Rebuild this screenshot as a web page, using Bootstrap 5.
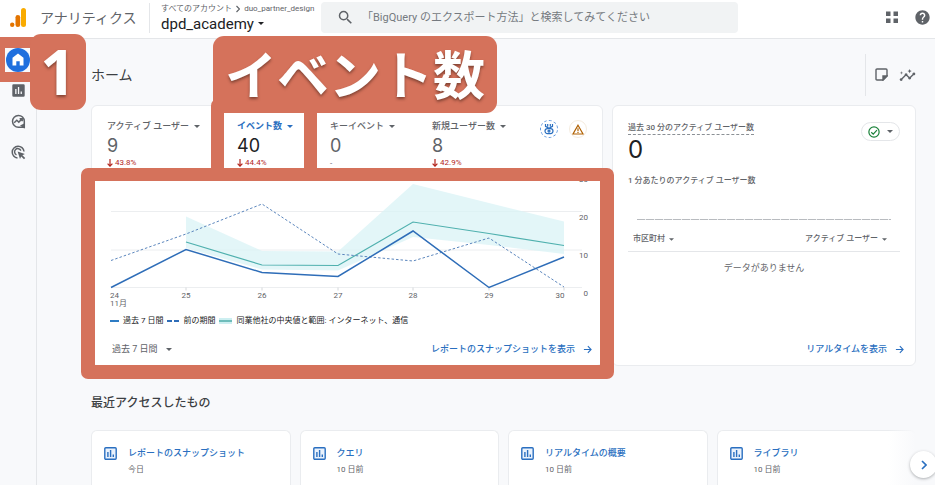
<!DOCTYPE html>
<html lang="ja">
<head>
<meta charset="utf-8">
<meta name="viewport" content="width=device-width, initial-scale=1">
<title>アナリティクス ホーム</title>
<link href="https://cdn.jsdelivr.net/npm/bootstrap@5.3.0/dist/css/bootstrap.min.css" rel="stylesheet">
<style>
:root { --coral: #d5725b; --ink: #3c4043; --grey: #5f6368; --link: #2a6fc0; --line: #e4e6e9; }
body { font-family: Roboto, "Noto Sans CJK JP", sans-serif; font-size: 9px; line-height: 12px; color: var(--grey); background: #f8f9fb; height: 100vh; overflow: hidden; }
button { font: inherit; color: inherit; background: none; border: 0; padding: 0; text-align: left; }
a { color: var(--link); text-decoration: none; }
svg { display: block; flex: none; fill: currentColor; }
.stroke-icon { fill: none; stroke: currentColor; }
.label-8 { font-size: 8px; }
.medium { font-weight: 500; }

.topbar { height: 39px; background: #fff; border-bottom: 1px solid var(--line); padding: 0 5px 3px 9px; }
.product { font-size: 14px; line-height: 20px; margin-left: 13px; width: 109px; }
.account { border-left: 1px solid var(--line); padding-left: 11px; width: 172px; }
.property { font-size: 15px; line-height: 18px; color: #202124; gap: 4px; }
.searchbox { flex: 0 1 417px; height: 31px; background: #f1f3f4; border-radius: 4px; padding: 0 17px; gap: 9px; }
.searchbox input { border: 0; background: none; outline: 0; font-size: 11px; line-height: 16px; padding: 0; min-width: 0; }
.searchbox input::placeholder { color: #757a80; opacity: 1; }

.siderail { width: 37px; flex: none; border-right: 1px solid var(--line); padding-top: 5px; }
.siderail li { height: 31px; position: relative; }
.home-dot { width: 24px; height: 24px; border-radius: 50%; background: #1f6fde; color: #fff; }

.content { padding: 0 19px 0 54px; min-width: 0; }
.titlebar { height: 66px; padding-top: 5px; }
.titlebar h1 { font-size: 14px; line-height: 20px; color: var(--ink); font-weight: 400; }
.tools { height: 42px; border-left: 1px solid var(--line); padding-left: 9px; gap: 11px; }
.panels { gap: 9px; }
.panel { background: #fff; border: 1px solid #eaecef; border-radius: 6px; }
.panel-live { width: 304px; flex: none; padding: 0 15px; }
.metrics { height: 64px; padding: 14px 15px 0; }
.metric-list { gap: 37px; }
.metric { position: relative; white-space: nowrap; }
.metric > button { gap: 5px; }
.metric.selected > button { color: var(--link); font-weight: 700; }
.metric.selected .metric-value { color: #202124; }
.metric-value { font-family: Inter, sans-serif; font-size: 18px; line-height: 24px; padding-top: 2px; }
.fall { font-size: 8px; line-height: 10px; color: #b3261e; gap: 2px; }
.badges { gap: 11px; }
.round { width: 18px; height: 18px; border-radius: 50%; border: 1px solid #f5ecdf; color: #b06000; }
.round-blue { border: 1px dashed #5b95dd; color: var(--link); }
.chart { width: 100%; height: auto; }
.chart text { font-size: 8px; fill: var(--grey); }
.legend-row { padding: 3px 18px; gap: 4px; color: #202124; font-size: 8px; }
.panel-foot { height: 35px; padding: 3px 10px 0 20px; }
.panel-live .panel-foot { padding: 3px 0 0; margin-right: -4px; }

.live-top { padding-top: 16px; }
.live-name { border-bottom: 1px dashed #8b9095; }
.live-value { font-family: Inter, sans-serif; font-size: 24px; line-height: 30px; color: #202124; }
.live-sub { margin-top: 10px; }
.chip { width: 39px; height: 19px; border: 1px solid var(--line); border-radius: 10px; color: var(--grey); }
.chip .stroke-icon { color: #188038; }
.minutes { height: 1px; margin: 32px 9px 0; background: repeating-linear-gradient(90deg, #b8bbbf 0 8px, #eceef0 8px 9px); }
.live-head { padding: 13px 13px 6px 5px; border-bottom: 1px solid var(--line); }
.live-empty { padding-top: 10px; }

.recent-title { font-size: 12px; line-height: 18px; margin: 28px 0 18px; color: var(--ink); font-weight: 500; }
.recent { display: grid; grid-template-columns: repeat(4, 1fr); gap: 9px; position: relative; }
.recent::after { content: ""; position: absolute; top: 0; right: 0; bottom: 0; width: 28px; background: linear-gradient(90deg, rgba(248,249,251,0), #f8f9fb); }
.recent .panel { padding: 16px 12px 0; gap: 11px; color: var(--link); border-bottom: 0; border-radius: 6px 6px 0 0; }
.recent small { font-size: 8px; line-height: 12px; margin-top: 5px; color: var(--grey); }
.next-btn { position: absolute; z-index: 2; right: -21px; top: 21px; width: 27px; height: 27px; border-radius: 50%; background: #fff; color: var(--link); box-shadow: 0 1px 3px rgba(60,64,67,.4); }

/* tutorial annotations laid over the page */
.note { position: absolute; z-index: 5; pointer-events: none; }
.note-text { background: var(--coral); color: #fff; border-radius: 11px; padding-bottom: 3px; text-shadow: 0 2px 3px rgba(60,30,20,.55); white-space: nowrap; display: flex; align-items: center; justify-content: center; }
.note-home { left: 0; top: -7px; width: 38px; height: 45px; border: solid var(--coral); border-width: 11px 8px 10px 5px; }
.note-step { left: 30px; top: -10px; width: 56px; height: 76px; font: 700 62px/72px "Open Sans", sans-serif; }
.note-metric { left: -26px; top: -22px; width: 106px; height: 83px; border: 13px solid var(--coral); border-top-width: 15px; border-radius: 8px 0 0 0; }
.note-event { left: -24px; top: -84px; width: 284px; height: 77px; font: 700 52px/72px "Noto Sans CJK JP", sans-serif; }
.note-chart { left: -11px; right: -12px; top: 62px; bottom: -14px; border: 14px solid var(--coral); border-top-width: 13px; border-radius: 7px; }
</style>
<script src="https://cdn.jsdelivr.net/npm/bootstrap@5.3.0/dist/js/bootstrap.bundle.min.js"></script>
</head>
<body class="d-flex flex-column">
<svg class="d-none" aria-hidden="true">
  <symbol id="caret" viewBox="0 0 6 3"><path d="M0 0h6L3 3z"/></symbol>
  <symbol id="arrow" viewBox="0 0 10 10"><path d="M1 5h8M5.400 1.300L9 5 5.400 8.700" fill="none" stroke="currentColor" stroke-width="1.200"/></symbol>
  <symbol id="down" viewBox="0 0 6 8"><path d="M3 0v7M.6 4.700L3 7.200l2.400-2.500" fill="none" stroke="currentColor" stroke-width="1.200"/></symbol>
  <symbol id="report" viewBox="0 0 13 13"><rect x=".8" y=".8" width="11.400" height="11.400" rx="1" fill="#eaf2fc" stroke="currentColor" stroke-width="1.400"/><path d="M3.200 5h1.400v5H3.200zM5.900 3h1.400v7H5.900zM8.600 7.500H10V10H8.600z"/></symbol>
</svg>

<header class="topbar d-flex align-items-center flex-shrink-0">
  <svg width="18" height="20" viewBox="0 0 18 20" aria-hidden="true"><rect x="12" y="0" width="5" height="19" rx="2.500" fill="#f9ab00"/><rect x="6.500" y="7" width="4.700" height="12" rx="2.300" fill="#e37400"/><circle cx="3.200" cy="16.800" r="2.200" fill="#e37400"/></svg>
  <div class="product">アナリティクス</div>
  <div class="account">
    <div class="d-flex align-items-center gap-1 label-8"><span>すべてのアカウント</span><svg class="stroke-icon" width="4" height="8" viewBox="0 0 4 8"><path d="M.5 1L3.500 4 .5 7" stroke-width="1.200"/></svg><span>duo_partner_design</span></div>
    <button type="button" class="property d-flex align-items-center">dpd_academy <svg width="6" height="3"><use href="#caret"/></svg></button>
  </div>
  <div class="searchbox d-flex align-items-center">
    <svg width="15" height="15" viewBox="2 2 20 20"><path d="M15.500 14h-.79l-.28-.27A6.470 6.470 0 0 0 16 9.500 6.500 6.500 0 1 0 9.500 16c1.610 0 3.090-.59 4.230-1.570l.27.28v.79l5 4.990L20.490 19l-4.990-5zm-6 0C7.010 14 5 11.990 5 9.500S7.010 5 9.500 5 14 7.010 14 9.500 11.990 14 9.500 14z"/></svg>
    <input type="text" class="flex-grow-1" aria-label="検索" placeholder="「BigQuery のエクスポート方法」と検索してみてください">
  </div>
  <div class="d-flex align-items-center ms-auto gap-3">
    <button type="button" aria-label="アプリ"><svg width="13" height="13" viewBox="0 0 13 13" fill="#3c4043"><path d="M0 .5h4.500V5H0zM7.500.5H12V5H7.500zM0 7.500h4.500V12H0zM7.500 7.500H12V12H7.500z"/></svg></button>
    <button type="button" aria-label="ヘルプ"><svg width="15" height="15" viewBox="1.500 1.500 21 21"><path d="M12 2C6.480 2 2 6.480 2 12s4.480 10 10 10 10-4.480 10-10S17.520 2 12 2zm1 17h-2v-2h2v2zm2.070-7.750l-.9.920C13.450 12.900 13 13.500 13 15h-2v-.5c0-1.100.45-2.100 1.170-2.830l1.240-1.260c.37-.36.59-.86.59-1.410 0-1.100-.9-2-2-2s-2 .9-2 2H8c0-2.210 1.790-4 4-4s4 1.790 4 4c0 .88-.36 1.680-.93 2.250z"/></svg></button>
  </div>
</header>

<div class="d-flex flex-grow-1">
  <nav class="siderail" aria-label="メイン">
    <ul class="list-unstyled m-0">
      <li class="d-flex align-items-center justify-content-center">
        <a href="#" class="home-dot d-flex align-items-center justify-content-center" aria-label="ホーム"><svg width="12" height="13" viewBox="0 0 12 13"><path d="M6 .5L.5 4.800V12.500H4.300V8.200H7.700V12.500H11.500V4.800z"/></svg></a>
        <span class="note note-home"></span><span class="note note-text note-step">1</span>
      </li>
      <li class="d-flex align-items-center justify-content-center"><button type="button" aria-label="レポート"><svg width="13" height="13" viewBox="0 0 13 13"><path fill-rule="evenodd" d="M1.500.3h10q1.200 0 1.200 1.200v10q0 1.200-1.200 1.200h-10Q.3 12.700.3 11.500v-10Q.3.3 1.500.3zM3.200 5v5h1.300V5zM5.900 3v7h1.300V3zM8.600 7.500V10h1.300V7.500z"/></svg></button></li>
      <li class="d-flex align-items-center justify-content-center"><button type="button" aria-label="探索"><svg class="stroke-icon" width="15" height="15" viewBox="0 0 15 15" stroke-width="1.500"><path d="M13.300 13.200V7.200A5.900 5.900 0 1 0 7.400 13.200z"/><path d="M3.200 8.800L5.800 6.300l2 1.800 3.300-3.300M8.600 4.700h2.600v2.600"/><path d="M10.500 11.600l2.300 1.600V10.500z" fill="currentColor"/></svg></button></li>
      <li class="d-flex align-items-center justify-content-center"><button type="button" aria-label="広告"><svg class="stroke-icon" width="15" height="15" viewBox="0 0 15 15" stroke-width="1.500"><path d="M6.500 13A5.900 5.900 0 1 1 13 6.500M5.500 9.900A3.300 3.300 0 1 1 9.900 5.600"/><path d="M6.600 6.600l7.300 2.500-2.500 1.200 2.800 2.800-1.200 1.200-2.800-2.800-1.200 2.500z" fill="currentColor" stroke="none"/></svg></button></li>
    </ul>
  </nav>

  <main class="content flex-grow-1 d-flex flex-column">
    <div class="titlebar d-flex align-items-center justify-content-between">
      <h1 class="m-0">ホーム</h1>
      <div class="tools d-flex align-items-center">
        <button type="button" aria-label="メモ"><svg class="stroke-icon" width="13" height="13" viewBox="0 0 13 13" stroke-width="1.400"><path d="M2 1h9q1 0 1 1v6l-4 4H2q-1 0-1-1V2q0-1 1-1z"/><path d="M8 12V8h4z" fill="currentColor"/></svg></button>
        <button type="button" aria-label="インサイト"><svg width="17" height="14" viewBox="0 2 24 19"><path d="M21 8c-1.450 0-2.260 1.440-1.930 2.510l-3.550 3.560c-.3-.09-.74-.09-1.040 0l-2.550-2.550C12.270 10.450 11.460 9 10 9c-1.450 0-2.270 1.440-1.930 2.520l-4.560 4.550C2.440 15.740 1 16.550 1 18c0 1.100.9 2 2 2 1.450 0 2.260-1.440 1.930-2.510l4.550-4.560c.3.09.74.09 1.040 0l2.550 2.550C12.730 16.550 13.540 18 15 18c1.450 0 2.270-1.440 1.930-2.520l3.560-3.550C21.560 12.260 23 11.450 23 10c0-1.100-.9-2-2-2zM15 9l.94-2.070L18 6l-2.060-.93L15 3l-.92 2.070L12 6l2.080.93zM3.500 11L4 9l2-.5L4 8l-.5-2L3 8l-2 .5L3 9z"/></svg></button>
      </div>
    </div>

    <div class="panels d-flex">
      <section class="panel flex-grow-1 position-relative">
        <div class="metrics d-flex justify-content-between">
          <div class="metric-list d-flex">
            <div class="metric">
              <button type="button" class="d-flex align-items-center medium">アクティブ ユーザー <svg width="6" height="3"><use href="#caret"/></svg></button>
              <div class="metric-value">9</div>
              <div class="fall d-flex align-items-center"><svg width="6" height="8"><use href="#down"/></svg>43.8%</div>
            </div>
            <div class="metric selected">
              <button type="button" class="d-flex align-items-center">イベント数 <svg width="6" height="3"><use href="#caret"/></svg></button>
              <div class="metric-value">40</div>
              <div class="fall d-flex align-items-center"><svg width="6" height="8"><use href="#down"/></svg>44.4%</div>
              <span class="note note-metric"></span><span class="note note-text note-event">イベント数</span>
            </div>
            <div class="metric">
              <button type="button" class="d-flex align-items-center medium">キーイベント <svg width="6" height="3"><use href="#caret"/></svg></button>
              <div class="metric-value">0</div>
              <div class="label-8">-</div>
            </div>
            <div class="metric">
              <button type="button" class="d-flex align-items-center medium">新規ユーザー数 <svg width="6" height="3"><use href="#caret"/></svg></button>
              <div class="metric-value">8</div>
              <div class="fall d-flex align-items-center"><svg width="6" height="8"><use href="#down"/></svg>42.9%</div>
            </div>
          </div>
          <div class="badges d-flex align-items-start">
            <button type="button" class="round round-blue d-flex align-items-center justify-content-center" aria-label="ベンチマーク"><svg class="stroke-icon" width="12" height="12" viewBox="0 0 12 12" stroke-width="1.200"><path d="M2.500 1v2.300L6 5.300l3.500-2V1M4.700 1v2.500M7.300 1v2.500"/><rect x="2" y="5.600" width="8" height="5" rx="2.500"/><circle cx="6" cy="8.100" r="1"/></svg></button>
            <button type="button" class="round d-flex align-items-center justify-content-center" aria-label="警告"><svg class="stroke-icon" width="12" height="11" viewBox="0 0 12 11" stroke-width="1.200"><path d="M6 1.200L11 10H1z"/><path d="M6 4.200v2.800M6 7.700v1.200"/></svg></button>
          </div>
        </div>

        <svg class="chart" viewBox="0 0 510 142" role="img" aria-label="過去 7 日間のイベント数">
          <path d="M19 41.500H490M19 80H490M19 117.500H490" stroke="#eceef0" fill="none"/>
          <path d="M94 117.500v3M170 117.500v3M246 117.500v3M321 117.500v3M397 117.500v3M472 117.500v3" stroke="#d5d8db"/>
          <path d="M94 46.500L170 81 246 81.500 321 14 397 33 472 51.500V84L397 75 321 67 246 100.500 170 99.500 94 78z" fill="#d9f3f6" fill-opacity=".75"/>
          <path d="M94 72L170 95 246 95.500 321 52 397 63.500 472 75.500" fill="none" stroke="#4fb0ae" stroke-width="1.200"/>
          <path d="M19 90.500L94 64 170 34 246 84 321 91 397 68 472 117" fill="none" stroke="#5b86bd" stroke-dasharray="2.500 2"/>
          <path d="M19 117.500L94 79.500 170 102.500 246 106.500 321 61 397 117.500 472 87" fill="none" stroke="#2e6db8" stroke-width="1.500"/>
          <text y="128"><tspan x="18">24</tspan><tspan x="18" dy="8">11月</tspan></text>
          <g text-anchor="middle"><text x="94" y="128">25</text><text x="170" y="128">26</text><text x="246" y="128">27</text><text x="321" y="128">28</text><text x="397" y="128">29</text><text x="468" y="128">30</text></g>
          <g text-anchor="end"><text x="496" y="12">30</text><text x="496" y="50">20</text><text x="496" y="88">10</text><text x="496" y="126">0</text></g>
        </svg>
        <div class="legend-row d-flex align-items-center">
          <svg width="9" height="2"><path d="M0 0h9v2H0z" fill="#2e7cc4"/></svg><span>過去 7 日間</span>
          <svg width="12" height="2"><path d="M0 0h5v2H0zM7 0h5v2H7z" fill="#2e6db8"/></svg><span>前の期間</span>
          <svg width="13" height="6"><path d="M0 0h13v6H0z" fill="#cdeff1"/><path d="M0 2h13v2H0z" fill="#6fbdbb"/></svg><span>同業他社の中央値と範囲: インターネット、通信</span>
        </div>
        <div class="panel-foot d-flex align-items-center justify-content-between">
          <button type="button" class="d-flex align-items-center gap-2">過去 7 日間 <svg width="6" height="3"><use href="#caret"/></svg></button>
          <a href="#" class="d-flex align-items-center gap-2 medium">レポートのスナップショットを表示 <svg width="9" height="9"><use href="#arrow"/></svg></a>
        </div>
        <span class="note note-chart"></span>
      </section>

      <section class="panel panel-live d-flex flex-column">
        <div class="live-top d-flex justify-content-between align-items-start">
          <div>
            <div class="live-name label-8 medium">過去 30 分のアクティブ ユーザー数</div>
            <div class="live-value">0</div>
          </div>
          <button type="button" class="chip d-flex align-items-center justify-content-evenly" aria-label="データの状態"><svg width="12" height="12" viewBox="0 0 11 11" class="stroke-icon" stroke-width="1.100"><circle cx="5.500" cy="5.500" r="4.700"/><path d="M3 5.700l1.800 1.700L8.200 3.800"/></svg><svg width="6" height="3"><use href="#caret"/></svg></button>
        </div>
        <div class="live-sub label-8 medium">1 分あたりのアクティブ ユーザー数</div>
        <div class="minutes"></div>
        <div class="live-head label-8 medium d-flex justify-content-between">
          <button type="button" class="d-flex align-items-center gap-1">市区町村 <svg width="5" height="3"><use href="#caret"/></svg></button>
          <button type="button" class="d-flex align-items-center gap-1">アクティブ ユーザー <svg width="5" height="3"><use href="#caret"/></svg></button>
        </div>
        <div class="live-empty text-center">データがありません</div>
        <div class="panel-foot d-flex align-items-center justify-content-end mt-auto"><a href="#" class="d-flex align-items-center gap-2 medium">リアルタイムを表示 <svg width="9" height="9"><use href="#arrow"/></svg></a></div>
      </section>
    </div>

    <h2 class="recent-title">最近アクセスしたもの</h2>
    <div class="recent flex-grow-1">
      <a href="#" class="panel d-flex align-items-start"><svg width="13" height="13"><use href="#report"/></svg><span class="d-flex flex-column medium">レポートのスナップショット<small class="fw-normal">今日</small></span></a>
      <a href="#" class="panel d-flex align-items-start"><svg width="13" height="13"><use href="#report"/></svg><span class="d-flex flex-column medium">クエリ<small class="fw-normal">10 日前</small></span></a>
      <a href="#" class="panel d-flex align-items-start"><svg width="13" height="13"><use href="#report"/></svg><span class="d-flex flex-column medium">リアルタイムの概要<small class="fw-normal">10 日前</small></span></a>
      <a href="#" class="panel d-flex align-items-start"><svg width="13" height="13"><use href="#report"/></svg><span class="d-flex flex-column medium">ライブラリ<small class="fw-normal">10 日前</small></span></a>
      <button type="button" class="next-btn d-flex align-items-center justify-content-center" aria-label="次へ"><svg class="stroke-icon" width="6" height="10" viewBox="0 0 6 10" stroke-width="1.600"><path d="M1 1l4 4-4 4"/></svg></button>
    </div>
  </main>
</div>
</body>
</html>
